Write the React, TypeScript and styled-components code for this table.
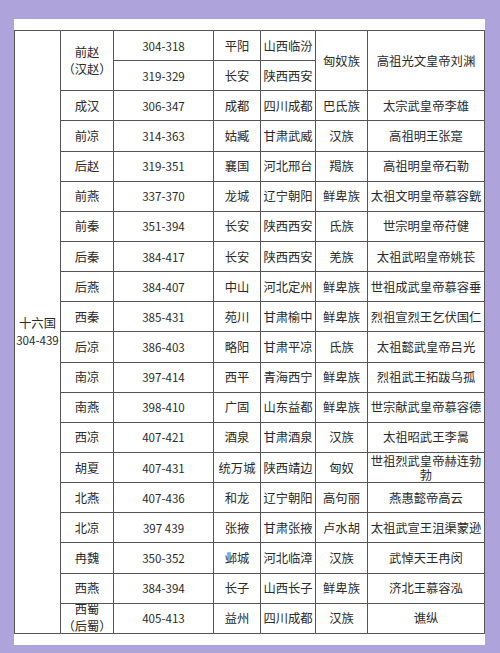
import styled, {createGlobalStyle} from "styled-components";

const GlobalStyle = createGlobalStyle`
  html, body {
    margin: 0;
    padding: 0;
    background: #afa3dc;
  }
  body {
    font-family: "Noto Sans CJK SC", "Noto Sans", sans-serif;
  }
`

const Sheet = styled.div`
  width: 471px;
  height: 626px;
  margin: 19px 0 0 14px;
  padding-top: 11px;
  box-sizing: border-box;
  background: #fff;
`
const Table = styled.table`
  width: 470px;
  border-collapse: collapse;
  table-layout: fixed;
  color: #2a2a2a;
  font-size: 12.3px;
  line-height: 14px;

  td {
    border: 1px solid #555;
    padding: 0;
    text-align: center;
    vertical-align: middle;
  }

  tr {
    height: 30.15px;
  }
`
const Col = styled.col<{ $w: number }>`
  width: ${p => p.$w}px;
`
const Num = styled.td`
  font-size: 11.6px;
`
const Era = styled.td`
  white-space: nowrap;
`
// two lines kept inside one row height, spilling a little like the original
const Stack = styled.div`
  height: 28px;
  display: flex;
  flex-direction: column;
  justify-content: center;
  line-height: 17px;
`
const Line = styled.span<{ $num?: boolean }>`
  display: block;
  font-size: ${p => p.$num ? '11.6px' : 'inherit'};
`

type Row = [string, string, string, string, string, string]

const widths = [46, 53, 100, 47, 55, 52, 117]

const rows: Row[] = [
    ['成汉', '306-347', '成都', '四川成都', '巴氐族', '太宗武皇帝李雄'],
    ['前凉', '314-363', '姑臧', '甘肃武威', '汉族', '高祖明王张寔'],
    ['后赵', '319-351', '襄国', '河北邢台', '羯族', '高祖明皇帝石勒'],
    ['前燕', '337-370', '龙城', '辽宁朝阳', '鲜卑族', '太祖文明皇帝慕容皝'],
    ['前秦', '351-394', '长安', '陕西西安', '氐族', '世宗明皇帝苻健'],
    ['后秦', '384-417', '长安', '陕西西安', '羌族', '太祖武昭皇帝姚苌'],
    ['后燕', '384-407', '中山', '河北定州', '鲜卑族', '世祖成武皇帝慕容垂'],
    ['西秦', '385-431', '苑川', '甘肃榆中', '鲜卑族', '烈祖宣烈王乞伏国仁'],
    ['后凉', '386-403', '略阳', '甘肃平凉', '氐族', '太祖懿武皇帝吕光'],
    ['南凉', '397-414', '西平', '青海西宁', '鲜卑族', '烈祖武王拓跋乌孤'],
    ['南燕', '398-410', '广固', '山东益都', '鲜卑族', '世宗献武皇帝慕容德'],
    ['西凉', '407-421', '酒泉', '甘肃酒泉', '汉族', '太祖昭武王李暠'],
    ['胡夏', '407-431', '统万城', '陕西靖边', '匈奴', '世祖烈武皇帝赫连勃勃'],
    ['北燕', '407-436', '和龙', '辽宁朝阳', '高句丽', '燕惠懿帝高云'],
    ['北凉', '397 439', '张掖', '甘肃张掖', '卢水胡', '太祖武宣王沮渠蒙逊'],
    ['冉魏', '350-352', '邺城', '河北临漳', '汉族', '武悼天王冉闵'],
    ['西燕', '384-394', '长子', '山西长子', '鲜卑族', '济北王慕容泓'],
]

const App = () => {
    return <>
        <GlobalStyle/>
        <Sheet>
            <Table>
                <colgroup>
                    {widths.map((w, i) => <Col key={i} $w={w}/>)}
                </colgroup>
                <tbody>
                <tr>
                    <Era rowSpan={20}>
                        <Stack>
                            <Line>十六国</Line>
                            <Line $num>304-439</Line>
                        </Stack>
                    </Era>
                    <Era rowSpan={2}>
                        <Stack>
                            <Line>前赵</Line>
                            <Line>（汉赵）</Line>
                        </Stack>
                    </Era>
                    <Num>304-318</Num>
                    <td>平阳</td>
                    <td>山西临汾</td>
                    <td rowSpan={2}>匈奴族</td>
                    <td rowSpan={2}>高祖光文皇帝刘渊</td>
                </tr>
                <tr>
                    <Num>319-329</Num>
                    <td>长安</td>
                    <td>陕西西安</td>
                </tr>
                {rows.map(r =>
                    <tr key={r[0]}>
                        <td>{r[0]}</td>
                        <Num>{r[1]}</Num>
                        <td>{r[2]}</td>
                        <td>{r[3]}</td>
                        <td>{r[4]}</td>
                        <td>{r[5]}</td>
                    </tr>
                )}
                <tr>
                    <Era>
                        <Stack>
                            <Line>西蜀</Line>
                            <Line>（后蜀）</Line>
                        </Stack>
                    </Era>
                    <Num>405-413</Num>
                    <td>益州</td>
                    <td>四川成都</td>
                    <td>汉族</td>
                    <td>谯纵</td>
                </tr>
                </tbody>
            </Table>
        </Sheet>
    </>
}

export default App
